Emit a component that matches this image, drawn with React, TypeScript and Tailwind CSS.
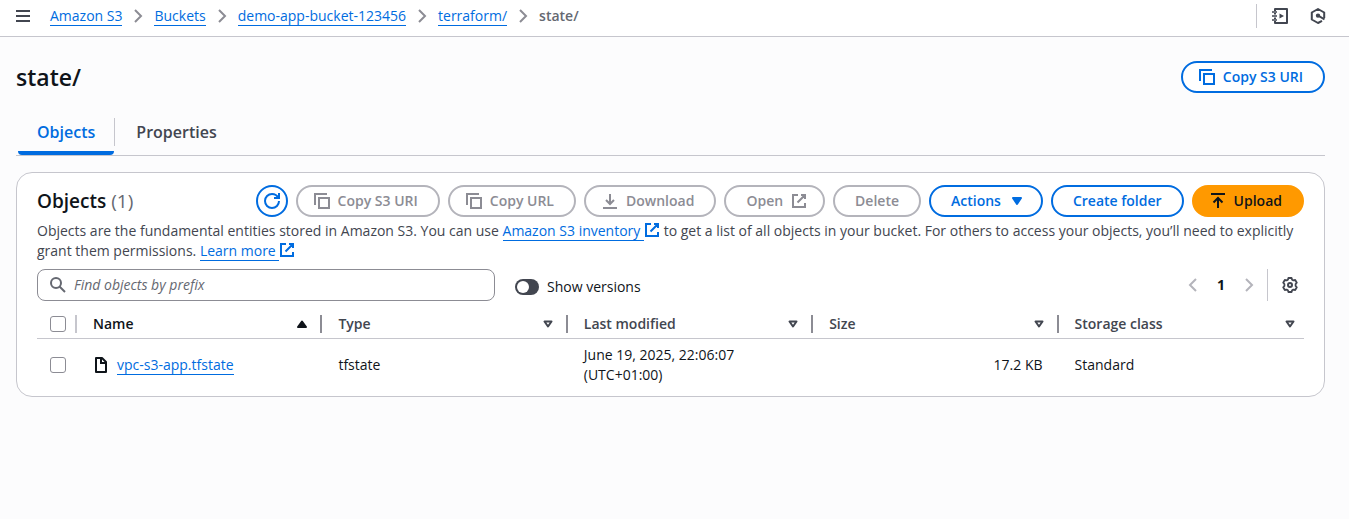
import type { ReactNode } from "react";

type IconProps = { children: ReactNode; className?: string };

function Icon({ children, className = "" }: IconProps) {
  return (
    <svg
      viewBox="0 0 16 16"
      className={`size-4 shrink-0 ${className}`}
      fill="none"
      stroke="currentColor"
      strokeWidth="2"
      aria-hidden="true"
    >
      {children}
    </svg>
  );
}

const CopyIcon = () => (
  <Icon>
    <path d="M5 5h10v10H5z" />
    <path d="M1 12V1h12" />
  </Icon>
);
const RefreshIcon = () => (
  <Icon>
    <path d="M15 8c0 3.87-3.13 7-7 7s-7-3.13-7-7 3.13-7 7-7c2.79 0 5.2 1.63 6.33 4" />
    <path d="M10 5h5V0" />
  </Icon>
);
const DownloadIcon = () => (
  <Icon>
    <path d="M1 15h14M8 1v10M4 7l4 4 4-4" />
  </Icon>
);
const UploadIcon = () => (
  <Icon>
    <path d="M1 1h14M8 15V5M3.5 9.5 8 5l4.500 4.500" />
  </Icon>
);
const ExternalIcon = ({ className = "" }: { className?: string }) => (
  <Icon className={className}>
    <path d="M10 2h4v4M6.500 9.500 14 2M14 10v4H2V2h5" />
  </Icon>
);
const ChevronRight = ({ className = "" }: { className?: string }) => (
  <Icon className={className}>
    <path d="m5 2 6 6-6 6" />
  </Icon>
);
const ChevronLeft = ({ className = "" }: { className?: string }) => (
  <Icon className={className}>
    <path d="m11 2-6 6 6 6" />
  </Icon>
);
const CaretDownFilled = () => (
  <Icon>
    <path d="M4 5h8l-4 6z" fill="currentColor" strokeLinejoin="round" />
  </Icon>
);
const SortAscIcon = () => (
  <Icon>
    <path d="M4 11h8L8 5.500z" fill="currentColor" strokeLinejoin="round" />
  </Icon>
);
const SortIcon = () => (
  <Icon>
    <path d="M4.500 5.500h7L8 10.500z" strokeLinejoin="round" />
  </Icon>
);
const SearchIcon = ({ className = "" }: { className?: string }) => (
  <Icon className={className}>
    <circle cx="6" cy="6" r="5" />
    <path d="m9.500 9.500 5.500 5.500" />
  </Icon>
);
const FileIcon = () => (
  <Icon>
    <path d="M3 1h6l4 4v10H3z" strokeLinejoin="round" />
    <path d="M8 1v5h5" />
  </Icon>
);
const MenuIcon = () => (
  <Icon>
    <path d="M1 3h14M1 8h14M1 13h14" />
  </Icon>
);
const NotebookIcon = () => (
  <Icon>
    <path d="M3 3V1h12v14H3v-2M3 5v1.500M3 9.500V11" strokeLinejoin="round" />
    <path d="M0 4h5M0 8h5M0 12h5" strokeWidth="1.600" />
    <path d="M7.500 5.500v5L12 8z" fill="currentColor" stroke="none" />
  </Icon>
);
const HexagonIcon = () => (
  <Icon>
    <path d="M14.200 10V4.500L8 1 1.800 4.500v7L8 15l4-2.200" strokeLinejoin="round" />
    <path d="m8 7.500 6.500 3.800" />
    <circle cx="8" cy="7.600" r="1.200" fill="currentColor" />
  </Icon>
);
const SettingsIcon = () => (
  <Icon>
    <path
      d="M6.400 1h3.200l.5 1.700 1.300.7 1.800-.4 1.600 2.700L13.600 7v2l1.200 1.300-1.600 2.700-1.800-.4-1.300.7L9.600 15H6.400l-.5-1.700-1.300-.7-1.800.4-1.600-2.700L2.400 9V7L1.200 5.700 2.800 3l1.800.4 1.300-.7z"
      strokeLinejoin="round"
      strokeWidth="1.800"
    />
    <circle cx="8" cy="8" r="2" />
  </Icon>
);

type ButtonProps = {
  children: ReactNode;
  variant?: "normal" | "primary";
  icon?: "start" | "end";
  disabled?: boolean;
};

function Button({ children, variant = "normal", icon, disabled }: ButtonProps) {
  const look = disabled
    ? "border-[#b4b4bb] text-[#8c8c94] bg-white"
    : variant === "primary"
      ? "border-[#ff9900] bg-[#ff9900] text-[#0f141a]"
      : "border-[#006ce0] bg-white text-[#006ce0]";
  const padding = icon === "start" ? "pl-4 pr-5" : icon === "end" ? "pl-5 pr-4" : "px-5";
  return (
    <button
      type="button"
      disabled={disabled}
      className={`flex h-8 items-center gap-2 rounded-full border-2 text-[14px] font-semibold whitespace-nowrap ${padding} ${look}`}
    >
      {children}
    </button>
  );
}

const link = "border-b border-[#006ce0] text-[#006ce0]";

const crumbs = ["Amazon S3", "Buckets", "demo-app-bucket-123456", "terraform/"];

const columns = ["Name", "Type", "Last modified", "Size", "Storage class"];

function CheckBox({ label }: { label: string }) {
  return (
    <input
      type="checkbox"
      aria-label={label}
      className="block size-4 appearance-none rounded-[3px] border border-[#8c8c94] bg-white"
    />
  );
}

export default function App() {
  return (
    <div className="min-h-screen bg-[#fcfcfd] font-['Open_Sans','Noto_Sans',sans-serif] text-[14px] leading-5 text-[#0f141a]">
      <header className="flex h-[37px] items-center border-b border-[#c6c6cd] bg-white pr-[23px] pb-1 pl-[15px]">
        <button type="button" aria-label="Open navigation" className="text-[#424650]">
          <MenuIcon />
        </button>
        <nav aria-label="Breadcrumbs" className="ml-[19px] flex-1">
          <ol className="flex items-center gap-2">
            {crumbs.map((c) => (
              <li key={c} className="flex items-center gap-2">
                <a href="#" className={`leading-[18px] ${link}`}>
                  {c}
                </a>
                <ChevronRight className="text-[#8c8c94]" />
              </li>
            ))}
            <li className="font-semibold text-[#656871]" aria-current="page">
              state/
            </li>
          </ol>
        </nav>
        <div className="flex items-center gap-[15px]">
          <div className="h-6 w-px bg-[#c6c6cd]" />
          <div className="flex items-center gap-[22px] text-[#424650]">
            <button type="button" aria-label="Tutorials">
              <NotebookIcon />
            </button>
            <button type="button" aria-label="Insights">
              <HexagonIcon />
            </button>
          </div>
        </div>
      </header>

      <main className="pt-6 pr-6 pl-4">
        <div className="flex items-center justify-between">
          <h1 className="text-[23px] leading-8 font-semibold">state/</h1>
          <Button icon="start">
            <CopyIcon />
            Copy S3 URI
          </Button>
        </div>

        <div role="tablist" className="mt-4 flex h-[47px] items-stretch border-b border-[#c6c6cd] text-[16px] font-semibold">
          <button
            type="button"
            role="tab"
            aria-selected="true"
            className="ml-0.5 rounded-sm border-b-4 border-[#006ce0] px-[19px] pt-1 text-[#006ce0]"
          >
            Objects
          </button>
          <div className="mt-[9px] h-7 w-px bg-[#c6c6cd]" />
          <button type="button" role="tab" aria-selected="false" className="border-b-4 border-transparent px-[21px] pt-1 text-[#424650]">
            Properties
          </button>
        </div>

        <section className="mt-4 rounded-2xl border border-[#c6c6cd] bg-white px-5 pt-3 pb-1">
          <div className="flex items-center justify-between">
            <h2 className="text-[19px] leading-6 font-semibold">
              Objects <span className="font-normal text-[#656871]">(1)</span>
            </h2>
            <div className="flex gap-2">
              <button
                type="button"
                aria-label="Refresh"
                className="flex size-8 items-center justify-center rounded-full border-2 border-[#006ce0] text-[#006ce0]"
              >
                <RefreshIcon />
              </button>
              <Button disabled icon="start">
                <CopyIcon />
                Copy S3 URI
              </Button>
              <Button disabled icon="start">
                <CopyIcon />
                Copy URL
              </Button>
              <Button disabled icon="start">
                <DownloadIcon />
                Download
              </Button>
              <Button disabled icon="end">
                Open
                <ExternalIcon />
              </Button>
              <Button disabled>Delete</Button>
              <Button icon="end">
                Actions
                <CaretDownFilled />
              </Button>
              <Button>Create folder</Button>
              <Button variant="primary" icon="start">
                <UploadIcon />
                Upload
              </Button>
            </div>
          </div>

          <p className="mt-1 text-[#424650]">
            Objects are the fundamental entities stored in Amazon S3. You can use{" "}
            <a href="#" className={link}>
              Amazon S3 inventory{" "}
            </a>
            <ExternalIcon className="inline align-[-2px] text-[#006ce0]" /> to get a list of all objects in your bucket. For others to
            access your objects, you’ll need to explicitly grant them permissions.{" "}
            <a href="#" className={link}>
              Learn more{" "}
            </a>
            <ExternalIcon className="inline align-[-2px] text-[#006ce0]" />
          </p>

          <div className="mt-2 flex items-center">
            <label className="flex h-8 w-[458px] items-center gap-2 rounded-lg border border-[#8c8c94] px-3">
              <SearchIcon className="text-[#656871]" />
              <input
                type="search"
                aria-label="Find objects by prefix"
                placeholder="Find objects by prefix"
                className="min-w-0 flex-1 outline-none placeholder:text-[#656871] placeholder:italic"
              />
            </label>
            <label className="mt-1 ml-5 flex items-center gap-2">
              <input
                type="checkbox"
                role="switch"
                className="h-4 w-6 appearance-none rounded-full bg-[#424650] before:m-0.5 before:block before:size-3 before:rounded-full before:bg-white"
              />
              Show versions
            </label>
            <div className="ml-auto flex items-center">
              <button type="button" aria-label="Previous page" disabled className="text-[#b4b4bb]">
                <ChevronLeft />
              </button>
              <button type="button" aria-label="Page 1" className="w-10 font-bold">
                1
              </button>
              <button type="button" aria-label="Next page" disabled className="text-[#b4b4bb]">
                <ChevronRight />
              </button>
              <div className="ml-2.5 h-8 w-px bg-[#c6c6cd]" />
              <button type="button" aria-label="Preferences" className="mr-1.5 ml-3.5 text-[#424650]">
                <SettingsIcon />
              </button>
            </div>
          </div>

          <table className="w-full table-fixed">
            <thead>
              <tr className="h-[37px] border-b border-[#c6c6cd]">
                <th className="w-10 p-0 pb-[5px] align-bottom">
                  <div className="flex h-[18px] items-center justify-between border-r-2 border-[#c6c6cd] pl-[13px]">
                    <CheckBox label="Select all" />
                  </div>
                </th>
                {columns.map((name, i) => {
                  const last = i === columns.length - 1;
                  return (
                    <th key={name} scope="col" className={`p-0 pb-[5px] text-left align-bottom font-semibold ${i === 0 ? "" : "text-[#424650]"}`}>
                      <div
                        className={`flex h-[18px] items-center justify-between pl-4 ${last ? "pr-1.5" : "border-r-2 border-[#8c8c94] pr-2.5"}`}
                      >
                        {name}
                        {i === 0 ? <SortAscIcon /> : <SortIcon />}
                      </div>
                    </th>
                  );
                })}
              </tr>
            </thead>
            <tbody>
              <tr className="h-[54px]">
                <td className="p-0 pl-[13px]">
                  <CheckBox label="Select vpc-s3-app.tfstate" />
                </td>
                <td className="px-4">
                  <div className="flex items-center gap-2">
                    <FileIcon />
                    <a href="#" className={`leading-[18px] ${link}`}>
                      vpc-s3-app.tfstate
                    </a>
                  </div>
                </td>
                <td className="px-4">tfstate</td>
                <td className="px-4">
                  June 19, 2025, 22:06:07
                  <br />
                  (UTC+01:00)
                </td>
                <td className="px-4 text-right">17.2 KB</td>
                <td className="px-4">Standard</td>
              </tr>
            </tbody>
          </table>
        </section>
      </main>
    </div>
  );
}
